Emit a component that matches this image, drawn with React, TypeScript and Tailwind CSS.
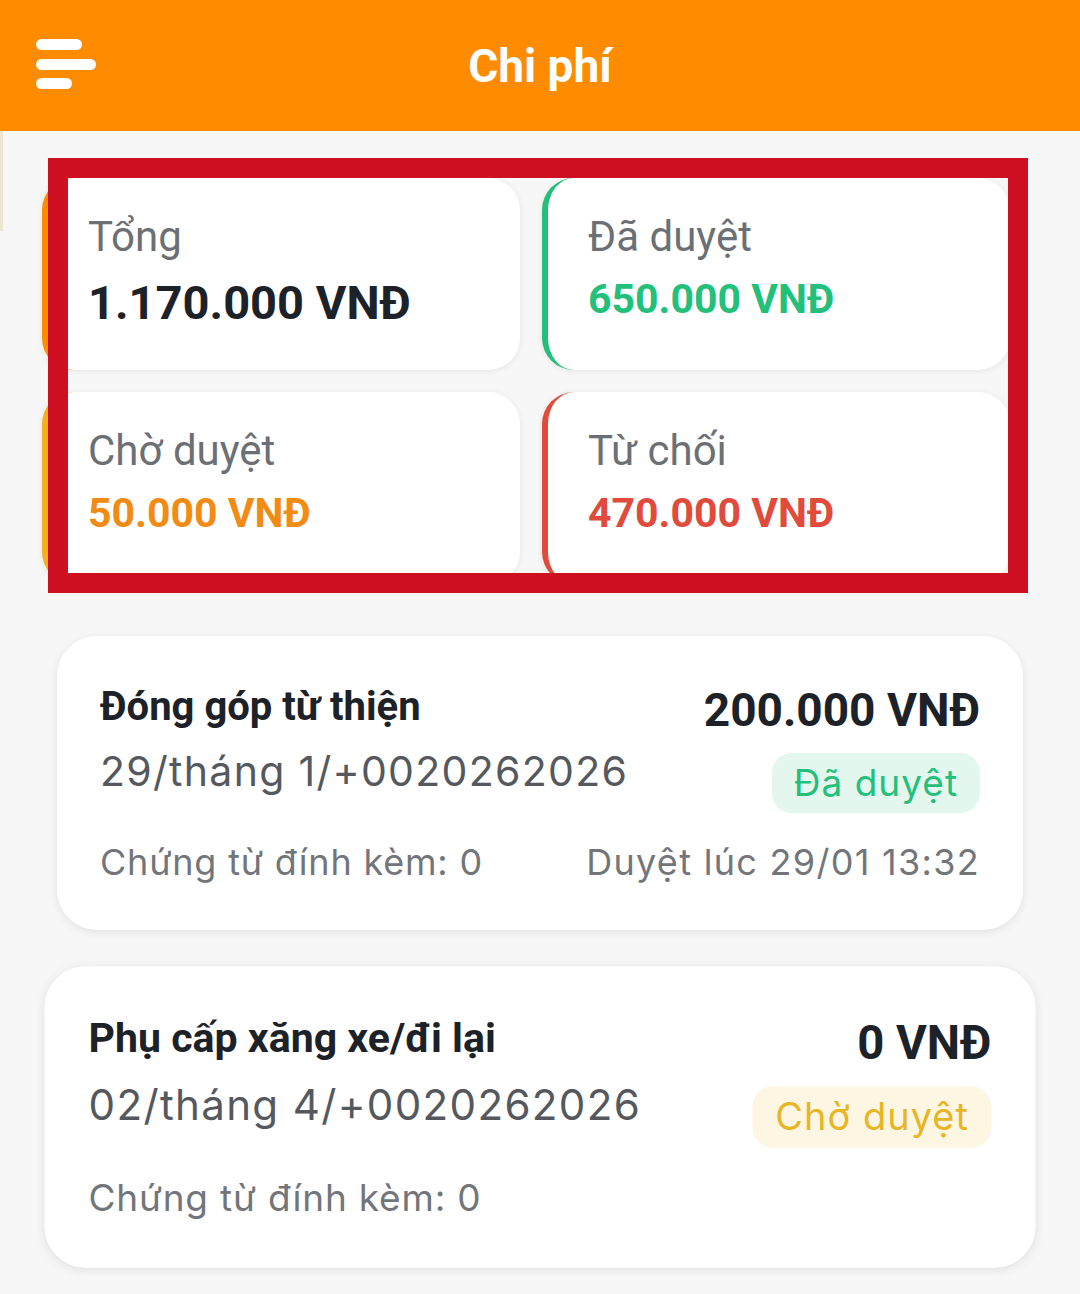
const stats = [
  { label: "Tổng", value: "1.170.000 VNĐ", accent: "border-[#ff8c00]", color: "text-[#1c2228]", size: "text-[47px]" },
  { label: "Đã duyệt", value: "650.000 VNĐ", accent: "border-[#22c07a]", color: "text-[#22c07a]", size: "text-[41px]" },
  { label: "Chờ duyệt", value: "50.000 VNĐ", accent: "border-[#f6b01e]", color: "text-[#f28b14]", size: "text-[41px]" },
  { label: "Từ chối", value: "470.000 VNĐ", accent: "border-[#e14b3b]", color: "text-[#e14b3b]", size: "text-[41px]" },
];

const expenses = [
  {
    title: "Đóng góp từ thiện",
    date: "29/tháng 1/+0020262026",
    amount: "200.000 VNĐ",
    status: "Đã duyệt",
    badge: "bg-[#e4f7ee] text-[#22c07a]",
    attachments: 0,
    approvedAt: "Duyệt lúc 29/01 13:32",
    scale: "",
  },
  {
    title: "Phụ cấp xăng xe/đi lại",
    date: "02/tháng 4/+0020262026",
    amount: "0 VNĐ",
    status: "Chờ duyệt",
    badge: "bg-[#fdf6e2] text-[#e8b526]",
    attachments: 0,
    approvedAt: "",
    scale: "scale-[1.026]",
  },
];

const MenuIcon = () => (
  <svg width="62" height="52" viewBox="0 0 62 52" fill="#ffffff">
    <rect x="1" y="1" width="46" height="11" rx="5.5" />
    <rect x="1" y="21" width="60" height="11" rx="5.5" />
    <rect x="1" y="40" width="36" height="11" rx="5.5" />
  </svg>
);

const App = () => {
  return (
    <div className="relative w-[1080px] h-[1294px] overflow-hidden bg-[#f7f7f7] font-['Roboto',sans-serif]">
      {/* Header */}
      <header className="grid h-[131px] grid-cols-[1fr_auto_1fr] items-center bg-[#ff8c00] px-[35px]">
        <div className="-mt-[4px]">
          <MenuIcon />
        </div>
        <h1 className="text-[46px] font-bold leading-none text-white">Chi phí</h1>
        <div />
      </header>
      <div className="absolute left-0 top-[131px] h-[100px] w-[3px] bg-[#efe4cf]" />

      {/* Summary cards */}
      <div className="ml-[42px] mt-[47px] grid grid-cols-[478px_468px] gap-x-[22px] gap-y-[22px]">
        {stats.map((s) => (
          <div
            key={s.label}
            className={`h-[192px] rounded-[32px] border-l-[6px] border-solid ${s.accent} bg-white pl-[40px] pt-[34px] shadow-[0_1px_6px_rgba(0,0,0,0.08)]`}
          >
            <div className="text-[42px] leading-[50px] text-[#6c7075]">{s.label}</div>
            <div className={`mt-[13px] font-bold leading-[1.2] ${s.size} ${s.color}`}>{s.value}</div>
          </div>
        ))}
      </div>

      {/* Expense list */}
      <div className="mt-[52px] flex flex-col items-center gap-[40px]">
        {expenses.map((e) => (
          <div
            key={e.title}
            className={`flex h-[294px] w-[966px] flex-col whitespace-nowrap rounded-[40px] bg-white px-[43px] pt-[49px] shadow-[0_2px_10px_rgba(0,0,0,0.09)] ${e.scale}`}
          >
            <div className="flex items-start justify-between">
              <div className="text-[40px] font-bold leading-[44px] text-[#1c2228]">{e.title}</div>
              <div className="text-[46px] font-bold leading-[50px] text-[#1c2228]">{e.amount}</div>
            </div>
            <div className="mt-[11px] flex items-start justify-between">
              <div className="font-['Inter',sans-serif] text-[41px] leading-[50px] tracking-[1.3px] text-[#55595e]">
                {e.date}
              </div>
              <div
                className={`mt-[7px] flex h-[60px] items-center rounded-[20px] px-[22px] font-['Inter',sans-serif] text-[37px] tracking-[1px] ${e.badge}`}
              >
                {e.status}
              </div>
            </div>
            <div className="mt-[26px] flex justify-between font-['Inter',sans-serif] text-[36px] leading-[46px] text-[#72767a]">
              <div className="tracking-[0.8px]">Chứng từ đính kèm: {e.attachments}</div>
              {e.approvedAt && <div className="tracking-[1.3px]">{e.approvedAt}</div>}
            </div>
          </div>
        ))}
      </div>

      {/* Highlight frame drawn over the summary */}
      <div className="pointer-events-none absolute left-[48px] top-[158px] h-[435px] w-[980px] border-[20px] border-[#cf1023]" />
    </div>
  );
};

export default App;
